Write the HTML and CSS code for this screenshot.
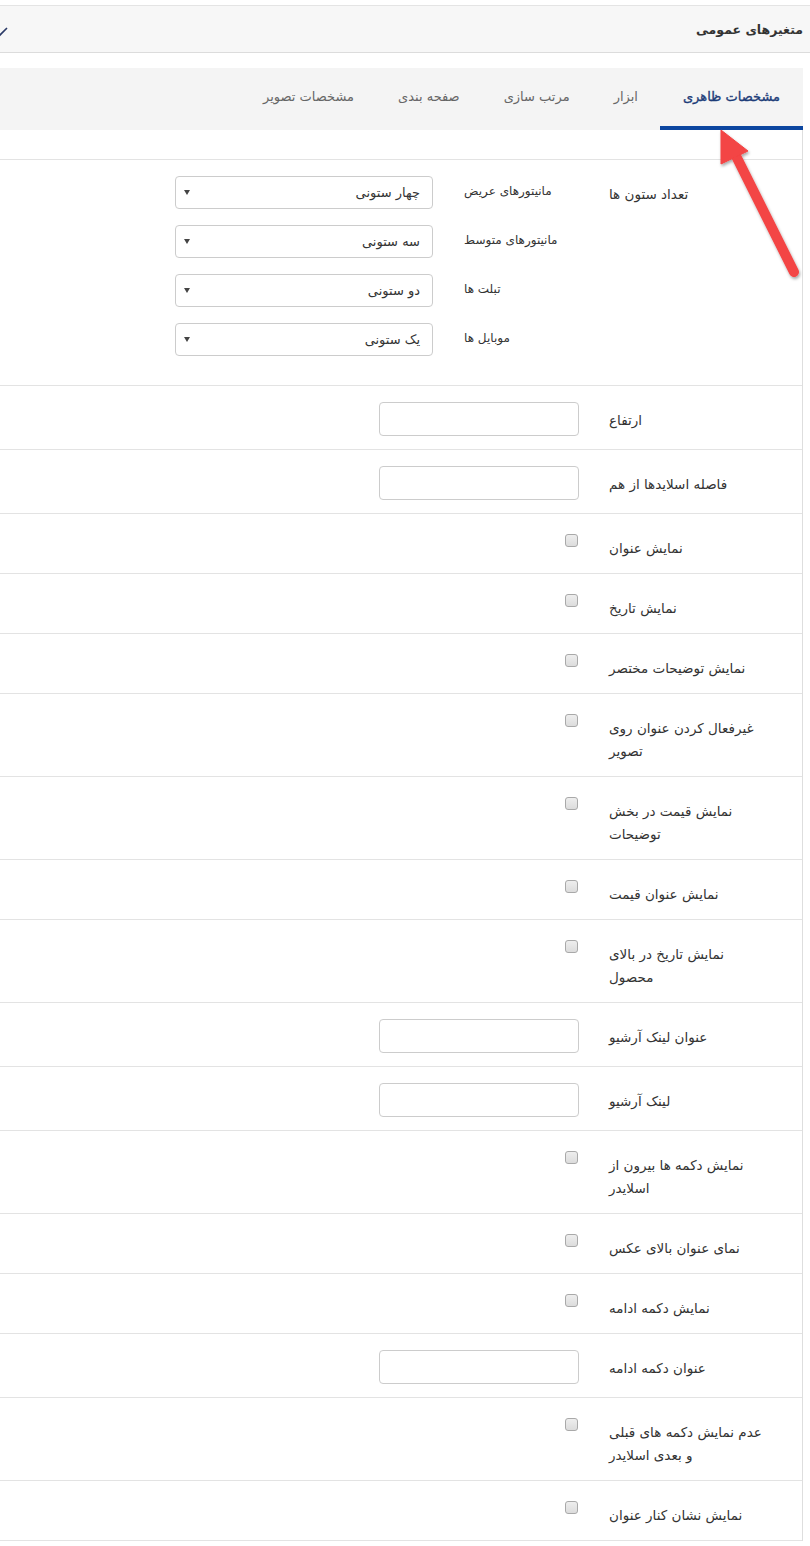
FILE: index.html
```html
<!DOCTYPE html>
<html lang="fa" dir="rtl">
<head>
    <meta charset="UTF-8">
    <meta name="viewport" content="width=device-width, initial-scale=1.0">
    <title>متغیرهای عمومی</title>
    <link rel="stylesheet" href="styles.css">
</head>
<body>

    <!-- سربرگ -->
    <div class="panel-head">
        <span class="panel-title">متغیرهای عمومی</span>
        <svg class="chevron" width="16" height="10" viewBox="0 0 16 10">
            <path d="M1 1 L8 8 L15 1" fill="none" stroke="#2b3a67" stroke-width="1.6"/>
        </svg>
    </div>

    <div class="settings">
        <!-- تب ها -->
        <div class="tabs">
            <div class="tab active">مشخصات ظاهری</div>
            <div class="tab">ابزار</div>
            <div class="tab">مرتب سازی</div>
            <div class="tab">صفحه بندی</div>
            <div class="tab">مشخصات تصویر</div>
        </div>

        <div class="tab-body">
            <div class="spacer"></div>

            <div class="row">
                <div class="label">تعداد ستون ها</div>
                <div class="control">
                    <div class="sub-row">
                        <div class="sub-label">مانیتورهای عریض</div>
                        <div class="select"><span>چهار ستونی</span><span class="caret"></span></div>
                    </div>
                    <div class="sub-row">
                        <div class="sub-label">مانیتورهای متوسط</div>
                        <div class="select"><span>سه ستونی</span><span class="caret"></span></div>
                    </div>
                    <div class="sub-row">
                        <div class="sub-label">تبلت ها</div>
                        <div class="select"><span>دو ستونی</span><span class="caret"></span></div>
                    </div>
                    <div class="sub-row">
                        <div class="sub-label">موبایل ها</div>
                        <div class="select"><span>یک ستونی</span><span class="caret"></span></div>
                    </div>
                </div>
            </div>

            <div class="row">
                <div class="label">ارتفاع</div>
                <div class="control"><input class="text-input" type="text"></div>
            </div>
            <div class="row">
                <div class="label">فاصله اسلایدها از هم</div>
                <div class="control"><input class="text-input" type="text"></div>
            </div>
            <div class="row">
                <div class="label">نمایش عنوان</div>
                <div class="control"><input class="check" type="checkbox"></div>
            </div>
            <div class="row">
                <div class="label">نمایش تاریخ</div>
                <div class="control"><input class="check" type="checkbox"></div>
            </div>
            <div class="row">
                <div class="label">نمایش توضیحات مختصر</div>
                <div class="control"><input class="check" type="checkbox"></div>
            </div>
            <div class="row">
                <div class="label">غیرفعال کردن عنوان روی<br>تصویر</div>
                <div class="control"><input class="check" type="checkbox"></div>
            </div>
            <div class="row">
                <div class="label">نمایش قیمت در بخش<br>توضیحات</div>
                <div class="control"><input class="check" type="checkbox"></div>
            </div>
            <div class="row">
                <div class="label">نمایش عنوان قیمت</div>
                <div class="control"><input class="check" type="checkbox"></div>
            </div>
            <div class="row">
                <div class="label">نمایش تاریخ در بالای<br>محصول</div>
                <div class="control"><input class="check" type="checkbox"></div>
            </div>
            <div class="row">
                <div class="label">عنوان لینک آرشیو</div>
                <div class="control"><input class="text-input" type="text"></div>
            </div>
            <div class="row">
                <div class="label">لینک آرشیو</div>
                <div class="control"><input class="text-input" type="text"></div>
            </div>
            <div class="row">
                <div class="label">نمایش دکمه ها بیرون از<br>اسلایدر</div>
                <div class="control"><input class="check" type="checkbox"></div>
            </div>
            <div class="row">
                <div class="label">نمای عنوان بالای عکس</div>
                <div class="control"><input class="check" type="checkbox"></div>
            </div>
            <div class="row">
                <div class="label">نمایش دکمه ادامه</div>
                <div class="control"><input class="check" type="checkbox"></div>
            </div>
            <div class="row">
                <div class="label">عنوان دکمه ادامه</div>
                <div class="control"><input class="text-input" type="text"></div>
            </div>
            <div class="row">
                <div class="label">عدم نمایش دکمه های قبلی<br>و بعدی اسلایدر</div>
                <div class="control"><input class="check" type="checkbox"></div>
            </div>
            <div class="row">
                <div class="label">نمایش نشان کنار عنوان</div>
                <div class="control"><input class="check" type="checkbox"></div>
            </div>
        </div>
    </div>

    <!-- فلش قرمز -->
    <svg class="pointer" width="810" height="300" viewBox="0 0 810 300">
        <defs>
            <filter id="shadow" x="-20%" y="-20%" width="140%" height="140%">
                <feDropShadow dx="1" dy="2" stdDeviation="1.5" flood-color="#000" flood-opacity="0.35"/>
            </filter>
        </defs>
        <g filter="url(#shadow)" fill="#f34444" stroke="#f34444">
            <line x1="794" y1="272" x2="734" y2="152" stroke-width="10" stroke-linecap="round"/>
            <polygon points="721,130 721,164 748,151" stroke-width="1" stroke-linejoin="round"/>
        </g>
    </svg>

</body>
</html>
```

FILE: styles.css
```css
body {
    font-family: "DejaVu Sans", sans-serif;
    font-size: 13px;
    color: #333;
    background-color: #fff;
    margin: 0;
    padding-top: 5px;
    width: 810px;
    overflow: hidden;
}
.panel-head {
    position: relative;
    height: 46px;
    background-color: #f7f7f7;
    border-top: 1px solid #e4e4e4;
    border-bottom: 1px solid #dcdcdc;
    padding-right: 7px;
    display: flex;
    align-items: center;
}
.panel-title {
    font-size: 12.5px;
    font-weight: bold;
    color: #333;
}
.chevron {
    position: absolute;
    left: -8px;
    top: 21px;
}
.settings {
    width: 803px;
    margin-top: 15px;
    margin-right: 7px;
}
.tabs {
    display: flex;
    height: 62px;
    background-color: #f4f4f4;
}
.tab {
    padding: 0 22px;
    line-height: 58px;
    border-bottom: 4px solid transparent;
    color: #666;
    font-size: 13px;
}
.tab.active {
    padding: 0 23px;
    border-bottom-color: #0c46a0;
    color: #1c3c78;
    -webkit-text-stroke: 0.35px #1c3c78;
}
.tab-body {
    border-right: 1px solid #dedede;
}
.spacer {
    height: 29px;
    border-bottom: 1px solid #e3e3e3;
}
.row {
    display: flex;
    align-items: flex-start;
    padding: 16px 30px 13px 0;
    border-bottom: 1px solid #e3e3e3;
}
.label {
    width: 163px;
    padding-top: 7px;
    line-height: 23px;
    text-align: left;
    white-space: nowrap;
    font-size: 13.5px;
    color: #333;
}
.control {
    margin-right: 30px;
    display: flex;
    flex-direction: column;
    align-items: flex-start;
}
.sub-row {
    display: flex;
    margin-bottom: 16px;
}
.sub-label {
    width: 115px;
    margin-left: 31px;
    line-height: 30px;
    text-align: left;
    white-space: nowrap;
    font-size: 12px;
}
.select {
    width: 258px;
    height: 33px;
    box-sizing: border-box;
    border: 1px solid #ccc;
    border-radius: 4px;
    background-color: #fff;
    display: flex;
    align-items: center;
    justify-content: space-between;
    padding: 0 12px 0 8px;
    font-size: 13px;
}
.caret {
    width: 0;
    height: 0;
    border-left: 3px solid transparent;
    border-right: 3px solid transparent;
    border-top: 5px solid #444;
}
.text-input {
    width: 200px;
    height: 34px;
    box-sizing: border-box;
    border: 1px solid #ccc;
    border-radius: 4px;
    margin: 0;
}
.check {
    appearance: none;
    width: 13px;
    height: 13px;
    margin: 4px 1px 0 0;
    border: 1px solid #a9a9a9;
    border-radius: 3px;
    background: linear-gradient(#eee, #dcdcdc);
}
.pointer {
    position: absolute;
    left: 0;
    top: 0;
    pointer-events: none;
}
```
